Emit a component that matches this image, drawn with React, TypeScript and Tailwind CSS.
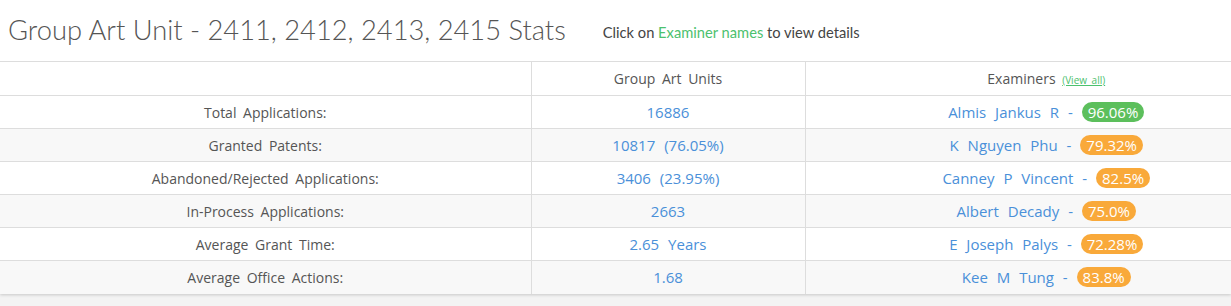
import React from 'react';

type Row = {
  label: string;
  value: string;
  examiner: string;
  rate: string;
  good?: boolean;
};

const rows: Row[] = [
  { label: 'Total Applications:', value: '16886', examiner: 'Almis Jankus R', rate: '96.06%', good: true },
  { label: 'Granted Patents:', value: '10817 (76.05%)', examiner: 'K Nguyen Phu', rate: '79.32%' },
  { label: 'Abandoned/Rejected Applications:', value: '3406 (23.95%)', examiner: 'Canney P Vincent', rate: '82.5%' },
  { label: 'In-Process Applications:', value: '2663', examiner: 'Albert Decady', rate: '75.0%' },
  { label: 'Average Grant Time:', value: '2.65 Years', examiner: 'E Joseph Palys', rate: '72.28%' },
  { label: 'Average Office Actions:', value: '1.68', examiner: 'Kee M Tung', rate: '83.8%' },
];

export default function App() {
  return (
    <div className="min-h-[306px] bg-[#f3f3f3]">
      <div className="bg-white shadow-[0_1px_3px_rgba(0,0,0,0.18)]">
        {/* Title */}
        <div className="flex items-end h-[61px] pl-[8px] pb-[18px]">
          <h1 className="font-['Lato'] font-light text-[27.3px] leading-none text-[#555]">
            Group Art Unit - 2411, 2412, 2413, 2415 Stats
          </h1>
          <p className="ml-[37px] mb-[3px] font-['Lato'] text-[14.7px] leading-none text-[#444]">
            Click on <span className="text-[#4cc16e]">Examiner names</span> to view details
          </p>
        </div>

        {/* Stats table */}
        <table className="w-full border-collapse font-['Open_Sans'] text-[14px] [word-spacing:3px]">
          <thead>
            <tr className="h-[34px] border-t border-[#dddddd]">
              <th className="w-[531px] font-normal" />
              <th className="w-[274px] font-normal text-[#555] border-l border-[#dddddd]">
                Group Art Units
              </th>
              <th className="pl-[56px] font-normal text-[#555] border-l border-[#dddddd]">
                Examiners{' '}
                <a className="text-[10px] text-[#4cc16e] underline [word-spacing:2px]">(View all)</a>
              </th>
            </tr>
          </thead>
          <tbody>
            {rows.map((r, i) => (
              <tr
                key={r.label}
                className={
                  'h-[33px] border-t border-[#dddddd] ' + (i % 2 === 1 ? 'bg-[#f8f8f8]' : 'bg-white')
                }
              >
                <td className="text-center text-[#555]">{r.label}</td>
                <td className="text-center text-[15px] [word-spacing:5px] text-[#4a90d9] border-l border-[#dddddd]">
                  {r.value}
                </td>
                <td className="pl-[56px] text-center text-[15px] [word-spacing:5px] border-l border-[#dddddd]">
                  <span className="text-[#4a90d9]">{r.examiner} -</span>{' '}
                  <span
                    className={
                      'inline-block px-[6px] h-[20px] leading-[20px] rounded-[10px] text-white text-[15px] [word-spacing:0] ' +
                      (r.good ? 'bg-[#5cbf5c]' : 'bg-[#f9a93a]')
                    }
                  >
                    {r.rate}
                  </span>
                </td>
              </tr>
            ))}
          </tbody>
        </table>
      </div>
    </div>
  );
}
